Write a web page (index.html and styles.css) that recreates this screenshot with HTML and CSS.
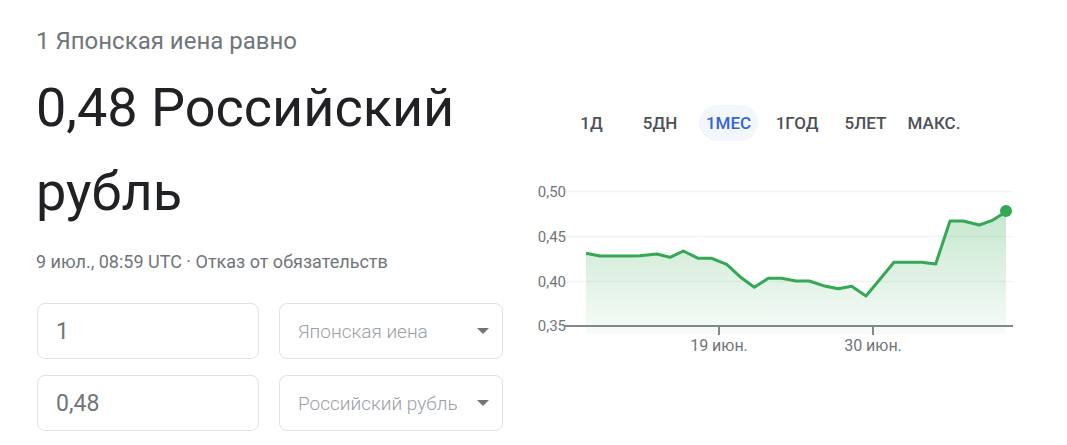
FILE: index.html
```html
<!DOCTYPE html>
<html lang="ru">
<head>
    <meta charset="UTF-8">
    <meta name="viewport" content="width=device-width, initial-scale=1.0">
    <title>Японская иена в Российский рубль</title>
    <link rel="stylesheet" href="styles.css">
</head>
<body>
    <div class="page">
        <div class="left">
            <div class="lead">1 Японская иена равно</div>
            <div class="big">0,48 Российский рубль</div>
            <div class="meta">9 июл., 08:59 UTC · Отказ от обязательств</div>

            <div class="converter">
                <div class="field">1</div>
                <div class="select">
                    <span>Японская иена</span>
                    <span class="arrow"></span>
                </div>
                <div class="field">0,48</div>
                <div class="select">
                    <span>Российский рубль</span>
                    <span class="arrow"></span>
                </div>
            </div>
        </div>

        <div class="right">
            <div class="tabs">
                <div class="tab">1Д</div>
                <div class="tab">5ДН</div>
                <div class="tab active">1МЕС</div>
                <div class="tab">1ГОД</div>
                <div class="tab">5ЛЕТ</div>
                <div class="tab">МАКС.</div>
            </div>

            <svg class="chart" width="490" height="185" viewBox="530 175 490 185">
                <defs>
                    <linearGradient id="fill" x1="0" y1="0" x2="0" y2="1">
                        <stop offset="0" stop-color="#34a853" stop-opacity="0.28"/>
                        <stop offset="1" stop-color="#34a853" stop-opacity="0.04"/>
                    </linearGradient>
                </defs>

                <!-- grid -->
                <line x1="565" y1="191.5" x2="1013" y2="191.5" class="grid"/>
                <line x1="565" y1="236.5" x2="1013" y2="236.5" class="grid"/>
                <line x1="565" y1="281.5" x2="1013" y2="281.5" class="grid"/>

                <text x="566" y="197" class="ylabel">0,50</text>
                <text x="566" y="242" class="ylabel">0,45</text>
                <text x="566" y="287" class="ylabel">0,40</text>
                <text x="566" y="331" class="ylabel">0,35</text>

                <!-- area + line -->
                <path fill="url(#fill)" d="M586 253.3 L600 256 L630 256 L640 255.7 L656.7 254 L670 257.3 L683.3 251 L698.3 258.3 L711.7 258.3 L726.7 264.3 L740 276.7 L754.3 287.3 L768.3 278.3 L781.7 278.3 L796 281 L809.3 281 L823.3 285.7 L838.3 288.7 L851.7 286.3 L866 296 L879.3 280 L894 262.3 L908.3 262.3 L921.7 262.3 L935.7 264 L950 221 L963.3 221 L979.3 225 L991.7 220.7 L1006 211.7 L1006 334 L586 334 Z"/>

                <line x1="565" y1="326" x2="1013" y2="326" class="axis"/>
                <line x1="719" y1="326" x2="719" y2="335" class="axis"/>
                <line x1="873" y1="326" x2="873" y2="335" class="axis"/>

                <path class="line" d="M586 253.3 L600 256 L630 256 L640 255.7 L656.7 254 L670 257.3 L683.3 251 L698.3 258.3 L711.7 258.3 L726.7 264.3 L740 276.7 L754.3 287.3 L768.3 278.3 L781.7 278.3 L796 281 L809.3 281 L823.3 285.7 L838.3 288.7 L851.7 286.3 L866 296 L879.3 280 L894 262.3 L908.3 262.3 L921.7 262.3 L935.7 264 L950 221 L963.3 221 L979.3 225 L991.7 220.7 L1006 211.7"/>
                <circle cx="1006" cy="211" r="6" fill="#34a853"/>

                <text x="719" y="351" class="xlabel">19 июн.</text>
                <text x="873" y="351" class="xlabel">30 июн.</text>
            </svg>
        </div>
    </div>
</body>
</html>
```

FILE: styles.css
```css
body {
    margin: 0;
    font-family: Roboto, "Liberation Sans", sans-serif;
    background-color: #fff;
    color: #202124;
}
.page {
    display: flex;
    align-items: flex-start;
}
.left {
    width: 475px;
    padding-left: 36px;
    padding-top: 27px;
    flex-shrink: 0;
}
.lead {
    font-size: 24px;
    line-height: 28px;
    color: #70757a;
}
.big {
    margin-top: 11px;
    font-size: 54px;
    line-height: 84px;
    color: #202124;
    width: 440px;
}
.meta {
    margin-top: 17px;
    font-size: 18px;
    line-height: 22px;
    color: #70757a;
}
.converter {
    margin-top: 30px;
    margin-left: 1px;
    display: grid;
    grid-template-columns: 222px 224px;
    grid-auto-rows: 56px;
    column-gap: 20px;
    row-gap: 16px;
}
.field, .select {
    box-sizing: border-box;
    border: 1px solid #dfe1e5;
    border-radius: 8px;
    display: flex;
    align-items: center;
}
.field {
    padding-left: 18px;
    font-size: 23px;
    color: #70757a;
}
.select {
    justify-content: space-between;
    padding-left: 18px;
    padding-right: 13px;
    font-size: 19px;
    font-weight: 300;
    color: #9aa0a6;
}
.arrow {
    width: 0;
    height: 0;
    border-left: 6px solid transparent;
    border-right: 6px solid transparent;
    border-top: 6px solid #70757a;
}
.right {
    margin-left: 19px;
    padding-top: 105px;
}
.tabs {
    display: flex;
    gap: 9.5px;
    margin-left: 32px;
}
.tab {
    width: 59px;
    height: 36px;
    border-radius: 18px;
    display: flex;
    align-items: center;
    justify-content: center;
    font-size: 17px;
    font-weight: 500;
    color: #4d5156;
}
.tab.active {
    background-color: #f3f6fb;
    color: #3367d6;
}
.chart {
    display: block;
    margin-top: 34px;
}
.grid {
    stroke: #f1f3f4;
    stroke-width: 1.5;
}
.axis {
    stroke: #80868b;
    stroke-width: 2;
}
.line {
    fill: none;
    stroke: #34a853;
    stroke-width: 3;
    stroke-linejoin: round;
}
.ylabel {
    font-family: Roboto, "Liberation Sans", sans-serif;
    font-size: 15px;
    fill: #70757a;
    text-anchor: end;
}
.xlabel {
    font-family: Roboto, "Liberation Sans", sans-serif;
    font-size: 16px;
    fill: #70757a;
    text-anchor: middle;
}
```
